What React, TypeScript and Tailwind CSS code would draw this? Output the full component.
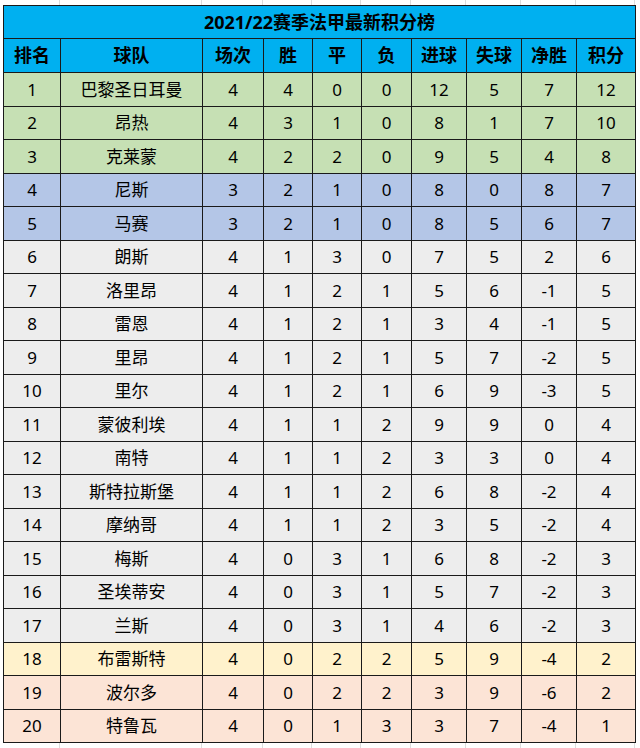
const rows: [number, string, number, number, number, number, number, number, number, number][] = [
  [1, "巴黎圣日耳曼", 4, 4, 0, 0, 12, 5, 7, 12],
  [2, "昂热", 4, 3, 1, 0, 8, 1, 7, 10],
  [3, "克莱蒙", 4, 2, 2, 0, 9, 5, 4, 8],
  [4, "尼斯", 3, 2, 1, 0, 8, 0, 8, 7],
  [5, "马赛", 3, 2, 1, 0, 8, 5, 6, 7],
  [6, "朗斯", 4, 1, 3, 0, 7, 5, 2, 6],
  [7, "洛里昂", 4, 1, 2, 1, 5, 6, -1, 5],
  [8, "雷恩", 4, 1, 2, 1, 3, 4, -1, 5],
  [9, "里昂", 4, 1, 2, 1, 5, 7, -2, 5],
  [10, "里尔", 4, 1, 2, 1, 6, 9, -3, 5],
  [11, "蒙彼利埃", 4, 1, 1, 2, 9, 9, 0, 4],
  [12, "南特", 4, 1, 1, 2, 3, 3, 0, 4],
  [13, "斯特拉斯堡", 4, 1, 1, 2, 6, 8, -2, 4],
  [14, "摩纳哥", 4, 1, 1, 2, 3, 5, -2, 4],
  [15, "梅斯", 4, 0, 3, 1, 6, 8, -2, 3],
  [16, "圣埃蒂安", 4, 0, 3, 1, 5, 7, -2, 3],
  [17, "兰斯", 4, 0, 3, 1, 4, 6, -2, 3],
  [18, "布雷斯特", 4, 0, 2, 2, 5, 9, -4, 2],
  [19, "波尔多", 4, 0, 2, 2, 3, 9, -6, 2],
  [20, "特鲁瓦", 4, 0, 1, 3, 3, 7, -4, 1],
];

const headers = ["排名", "球队", "场次", "胜", "平", "负", "进球", "失球", "净胜", "积分"];

const cols = "grid-cols-[57px_142px_61px_49px_49px_50px_55px_55px_55px_59px]";

function rowColor(rank: number) {
  if (rank <= 3) return "bg-[#c6e0b4]";
  if (rank <= 5) return "bg-[#b4c6e7]";
  if (rank === 18) return "bg-[#fff2cc]";
  if (rank >= 19) return "bg-[#fce4d6]";
  return "bg-[#ededed]";
}

function GridStrip() {
  // faint spreadsheet gridlines outside the table
  return (
    <div className={`grid ${cols} h-[5px] ml-[3px]`}>
      {headers.map((h) => (
        <div key={h} className="border-r border-[#dcdcdc]" />
      ))}
    </div>
  );
}

export default function App() {
  return (
    <div
      className="w-[640px] h-[748px] bg-white overflow-hidden text-black"
      style={{ fontFamily: '"Noto Sans", "Noto Sans CJK SC", sans-serif' }}
    >
      <GridStrip />
      <div className="flex">
        <div className="w-[3px] shrink-0" />
        <div className="border-t border-l border-[#1a1a1a]">
          <div className="h-[33px] bg-[#00b0f0] border-r border-b border-[#1a1a1a] flex items-center justify-center text-[18px] font-bold w-[632px]">
            2021/22赛季法甲最新积分榜
          </div>
          <div className={`grid ${cols} h-[34px] bg-[#00b0f0]`}>
            {headers.map((h) => (
              <div
                key={h}
                className="border-r border-b border-[#1a1a1a] flex items-center justify-center text-[18px] font-bold"
              >
                {h}
              </div>
            ))}
          </div>
          {rows.map((r, i) => (
            <div
              key={r[0]}
              className={`grid ${cols} ${i % 2 === 0 ? "h-[34px]" : "h-[33px]"} ${rowColor(r[0])}`}
            >
              {r.map((v, j) => (
                <div
                  key={j}
                  className="border-r border-b border-[#1a1a1a] flex items-center justify-center text-[17px]"
                >
                  {v}
                </div>
              ))}
            </div>
          ))}
        </div>
      </div>
      <GridStrip />
    </div>
  );
}
